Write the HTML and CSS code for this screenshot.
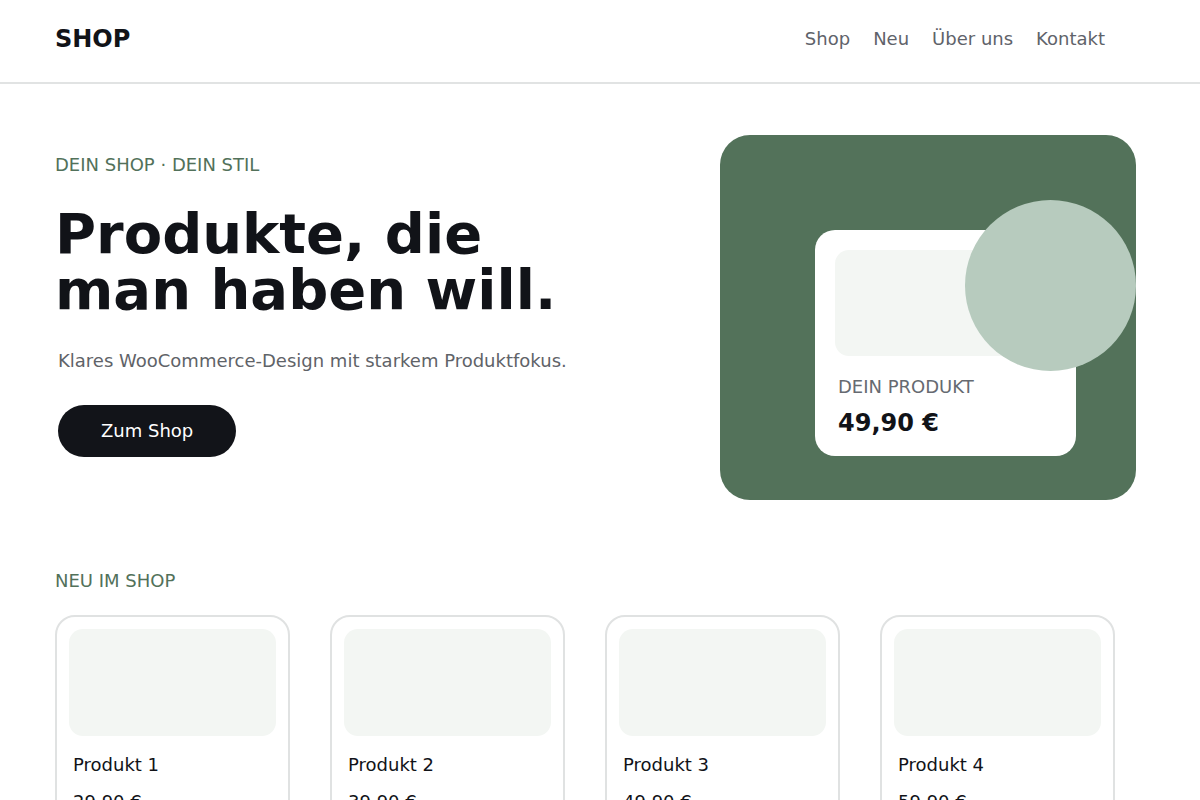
FILE: index.html
```html
<!DOCTYPE html>
<html lang="de">
<head>
<meta charset="utf-8">
<title>SHOP</title>
<link rel="stylesheet" href="styles.css">
</head>
<body>
<header class="site-header">
  <div class="logo">SHOP</div>
  <nav class="nav">
    <a href="#">Shop</a>
    <a href="#">Neu</a>
    <a href="#">Über uns</a>
    <a href="#">Kontakt</a>
  </nav>
</header>
<main class="page">
  <section class="hero">
    <div class="hero-text">
      <p class="eyebrow">DEIN SHOP · DEIN STIL</p>
      <h1 class="headline">Produkte, die man haben will.</h1>
      <p class="lead">Klares WooCommerce-Design mit starkem Produktfokus.</p>
      <a class="btn" href="#">Zum Shop</a>
    </div>
    <div class="hero-visual">
      <div class="blob"></div>
      <div class="showcase-card">
        <div class="showcase-img"></div>
        <div class="showcase-label">DEIN PRODUKT</div>
        <div class="showcase-price">49,90 €</div>
      </div>
    </div>
  </section>
  <section class="new">
    <p class="eyebrow">NEU IM SHOP</p>
    <div class="products">
      <div class="product">
        <div class="product-img"></div>
        <div class="product-info"><div class="product-name">Produkt 1</div><div class="product-price">29,90 €</div></div>
      </div>
      <div class="product">
        <div class="product-img"></div>
        <div class="product-info"><div class="product-name">Produkt 2</div><div class="product-price">39,90 €</div></div>
      </div>
      <div class="product">
        <div class="product-img"></div>
        <div class="product-info"><div class="product-name">Produkt 3</div><div class="product-price">49,90 €</div></div>
      </div>
      <div class="product">
        <div class="product-img"></div>
        <div class="product-info"><div class="product-name">Produkt 4</div><div class="product-price">59,90 €</div></div>
      </div>
    </div>
  </section>
</main>
</body>
</html>
```
FILE: styles.css
```css
* { box-sizing: border-box; }
html, body { margin: 0; padding: 0; background: #ffffff; }
body {
  font-family: "DejaVu Sans", sans-serif;
  color: #111318;
}
a { text-decoration: none; color: inherit; }

.site-header {
  display: flex;
  align-items: center;
  justify-content: space-between;
  padding: 25px 95px 29px 55px;
  border-bottom: 2px solid #e1e3e3;
}
.logo {
  font-size: 24px;
  font-weight: bold;
  line-height: 28px;
  color: #111318;
}
.nav {
  display: flex;
  gap: 23px;
  font-size: 18px;
  line-height: 28px;
}
.nav a { color: #5f636a; }

.page { padding: 0 55px; }

.hero {
  display: grid;
  grid-template-columns: 1fr 416px;
  align-items: start;
  padding: 51px 9px 0 0;
}
.hero-text { padding-top: 18px; }
.eyebrow {
  margin: 0;
  font-size: 18px;
  line-height: 24px;
  color: #52715a;
}
.headline {
  margin: 29px 0 0;
  max-width: 540px;
  font-size: 56px;
  line-height: 56px;
  font-weight: bold;
  color: #111318;
}
.lead {
  margin: 29px 0 0;
  padding-left: 3px;
  font-size: 18px;
  line-height: 28px;
  color: #5f6368;
}
.btn {
  display: inline-block;
  margin: 30px 0 0 3px;
  padding: 15px 43px;
  font-size: 18px;
  line-height: 22px;
  color: #ffffff;
  background: #121419;
  border-radius: 26px;
}

.hero-visual {
  position: relative;
  height: 365px;
  padding: 95px 60px 0 95px;
  background: #53725a;
  border-radius: 30px;
}
.blob {
  position: absolute;
  top: 65px;
  right: 0;
  width: 171px;
  height: 171px;
  border-radius: 50%;
  background: #b7cbbe;
  z-index: 2;
}
.showcase-card {
  position: relative;
  background: #ffffff;
  border-radius: 20px;
  padding: 20px 20px 19px;
}
.showcase-img {
  height: 106px;
  background: #f3f6f3;
  border-radius: 14px;
}
.showcase-label {
  margin-top: 19px;
  padding-left: 3px;
  font-size: 18px;
  line-height: 24px;
  color: #666a71;
}
.showcase-price {
  margin-top: 10px;
  padding-left: 3px;
  font-size: 24px;
  line-height: 28px;
  font-weight: bold;
  color: #111318;
}

.new { padding-top: 69px; }
.products {
  display: grid;
  grid-template-columns: repeat(4, 235px);
  gap: 40px;
  margin-top: 22px;
}
.product {
  border: 2px solid #e0e2e2;
  border-radius: 20px;
  padding: 12px;
}
.product-img {
  height: 107px;
  background: #f3f6f3;
  border-radius: 14px;
}
.product-info {
  padding: 17px 4px 12px;
}
.product-name {
  font-size: 18px;
  line-height: 24px;
  color: #111318;
}
.product-price {
  margin-top: 13px;
  font-size: 18px;
  line-height: 24px;
  color: #111318;
}
```
